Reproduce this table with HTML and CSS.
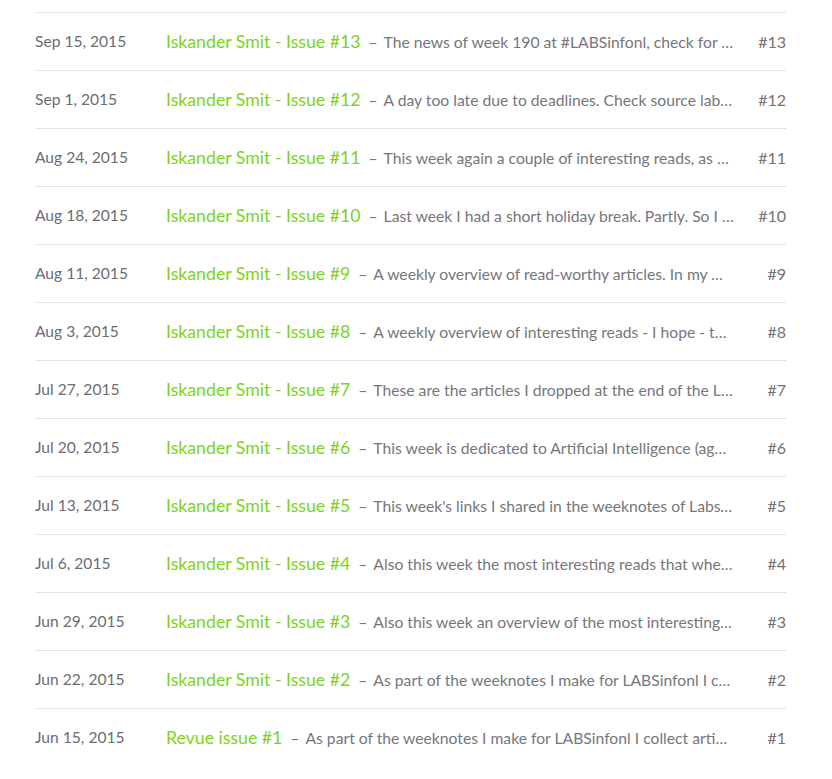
FILE: index.html
```html
<!DOCTYPE html>
<html>
<head>
<meta charset="utf-8">
<link rel="stylesheet" href="styles.css">
</head>
<body>
<div class="list">
  <div class="row"><span class="date">Sep 15, 2015</span><span class="main"><a class="title">Iskander Smit - Issue #13</a><span class="dash">–</span><span class="desc">The news of week 190 at #LABSinfonl, check for the most interesting reads of this week and more</span></span><span class="num">#13</span></div>
  <div class="row"><span class="date">Sep 1, 2015</span><span class="main"><a class="title">Iskander Smit - Issue #12</a><span class="dash">–</span><span class="desc">A day too late due to deadlines. Check source labsinfo.nl for more of the weeknotes</span></span><span class="num">#12</span></div>
  <div class="row"><span class="date">Aug 24, 2015</span><span class="main"><a class="title">Iskander Smit - Issue #11</a><span class="dash">–</span><span class="desc">This week again a couple of interesting reads, as always shared in the weeknotes</span></span><span class="num">#11</span></div>
  <div class="row"><span class="date">Aug 18, 2015</span><span class="main"><a class="title">Iskander Smit - Issue #10</a><span class="dash">–</span><span class="desc">Last week I had a short holiday break. Partly. So I have more interesting reads</span></span><span class="num">#10</span></div>
  <div class="row"><span class="date">Aug 11, 2015</span><span class="main"><a class="title">Iskander Smit - Issue #9</a><span class="dash">–</span><span class="desc">A weekly overview of read-worthy articles. In my weeknotes for LABSinfonl</span></span><span class="num">#9</span></div>
  <div class="row"><span class="date">Aug 3, 2015</span><span class="main"><a class="title">Iskander Smit - Issue #8</a><span class="dash">–</span><span class="desc">A weekly overview of interesting reads - I hope - that I shared in the weeknotes</span></span><span class="num">#8</span></div>
  <div class="row"><span class="date">Jul 27, 2015</span><span class="main"><a class="title">Iskander Smit - Issue #7</a><span class="dash">–</span><span class="desc">These are the articles I dropped at the end of the LABS weeknotes this week</span></span><span class="num">#7</span></div>
  <div class="row"><span class="date">Jul 20, 2015</span><span class="main"><a class="title">Iskander Smit - Issue #6</a><span class="dash">–</span><span class="desc">This week is dedicated to Artificial Intelligence (again) and the consequences</span></span><span class="num">#6</span></div>
  <div class="row"><span class="date">Jul 13, 2015</span><span class="main"><a class="title">Iskander Smit - Issue #5</a><span class="dash">–</span><span class="desc">This week's links I shared in the weeknotes of LabsInfo this week</span></span><span class="num">#5</span></div>
  <div class="row"><span class="date">Jul 6, 2015</span><span class="main"><a class="title">Iskander Smit - Issue #4</a><span class="dash">–</span><span class="desc">Also this week the most interesting reads that where shared in the weeknotes</span></span><span class="num">#4</span></div>
  <div class="row"><span class="date">Jun 29, 2015</span><span class="main"><a class="title">Iskander Smit - Issue #3</a><span class="dash">–</span><span class="desc">Also this week an overview of the most interesting articles of the week</span></span><span class="num">#3</span></div>
  <div class="row"><span class="date">Jun 22, 2015</span><span class="main"><a class="title">Iskander Smit - Issue #2</a><span class="dash">–</span><span class="desc">As part of the weeknotes I make for LABSinfonl I collect articles</span></span><span class="num">#2</span></div>
  <div class="row"><span class="date">Jun 15, 2015</span><span class="main"><a class="title">Revue issue #1</a><span class="dash">–</span><span class="desc">As part of the weeknotes I make for LABSinfonl I collect articles that are worth reading</span></span><span class="num">#1</span></div>
</div>
</body>
</html>
```

FILE: styles.css
```css
html, body {
  margin: 0;
  padding: 0;
  background: #fff;
}
body {
  font-family: Lato, "Open Sans", sans-serif;
  font-weight: 400;
  color: #666;
}
.list {
  margin: 12px 46px 0 35px;
}
.row {
  display: flex;
  align-items: center;
  box-sizing: border-box;
  height: 58px;
  padding-bottom: 1px;
  border-top: 1px solid #e2e2e9;
}
.date {
  flex: 0 0 131px;
  font-size: 15.6px;
  color: #6c6c72;
}
.main {
  flex: 1 1 auto;
  min-width: 0;
  padding-right: 3px;
  white-space: nowrap;
  overflow: hidden;
  text-overflow: ellipsis;
  font-size: 15.7px;
  color: #76767b;
}
.title {
  font-size: 17.7px;
  color: #7ed321;
  text-decoration: none;
}
.dash {
  margin: 0 6px 0 8px;
}
.num {
  flex: 0 0 49px;
  text-align: right;
  font-size: 16px;
  color: #727277;
}
```
